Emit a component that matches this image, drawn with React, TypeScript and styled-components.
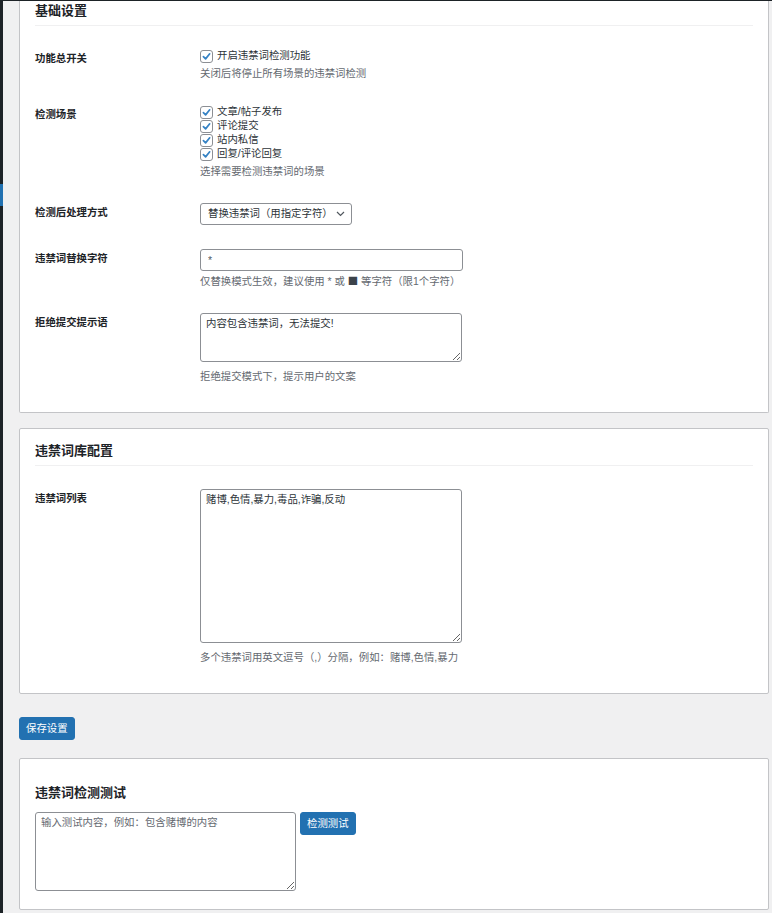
import React from "react";
import styled, { createGlobalStyle } from "styled-components";

const GlobalStyle = createGlobalStyle`
  html, body {
    margin: 0;
    padding: 0;
    background: #f0f0f1;
  }
  body {
    font-family: "Liberation Sans", "Noto Sans CJK SC", sans-serif;
    font-size: 10.4px;
    line-height: 14px;
    color: #1d2327;
  }
  * { box-sizing: border-box; }
`;

const TopBar = styled.div`
  height: 1px;
  background: #1d2327;
`;

const Layout = styled.div`
  display: flex;
  min-height: 912px;
`;

const SideEdge = styled.div`
  width: 3px;
  flex: none;
  background: #1d2327;
  display: flex;
  flex-direction: column;
`;

const SideActive = styled.div`
  margin-top: 183px;
  height: 22px;
  background: #2271b1;
`;

const Main = styled.main`
  flex: 1;
  padding: 0 3px 2px 16px;
  display: flex;
  flex-direction: column;
  align-items: stretch;
`;

const Card = styled.section<{ $clipped?: boolean; $gap?: number }>`
  background: #fff;
  border: 1px solid #c3c4c7;
  border-top-width: ${(p) => (p.$clipped ? 0 : 1)}px;
  border-radius: ${(p) => (p.$clipped ? "0 0 2px 2px" : "2px")};
  margin-top: ${(p) => p.$gap ?? 0}px;
  padding: ${(p) => (p.$clipped ? 1 : 13)}px 15px 16px;
`;

const TestCard = styled(Card)`
  padding: 25px 15px 18px;
`;

const CardTitle = styled.h2<{ $plain?: boolean }>`
  margin: 0;
  font-size: 13px;
  line-height: 18px;
  font-weight: 600;
  color: #1d2327;
  padding-bottom: ${(p) => (p.$plain ? 0 : 5)}px;
  border-bottom: ${(p) => (p.$plain ? "none" : "1px solid #f0f0f1")};
  margin-bottom: ${(p) => (p.$plain ? 10 : 0)}px;
`;

const Rows = styled.div`
  margin-top: 11px;
`;

const Row = styled.div`
  display: grid;
  grid-template-columns: 165px 1fr;
  padding: 12px 0;
`;

const RowLabel = styled.div`
  font-weight: 600;
  line-height: 15px;
  padding-top: 2px;
  color: #1d2327;
`;

const Field = styled.div`
  display: flex;
  flex-direction: column;
  align-items: flex-start;
`;

const CheckLine = styled.label`
  display: flex;
  align-items: center;
  height: 14px;
  gap: 4px;
  color: #2c3338;
  cursor: pointer;
`;

const HiddenInput = styled.input`
  position: absolute;
  opacity: 0;
  width: 0;
  height: 0;
  margin: 0;
`;

const CheckBox = styled.span`
  width: 13px;
  height: 13px;
  flex: none;
  display: inline-flex;
  align-items: center;
  justify-content: center;
  background: #fff;
  border: 1px solid #8c8f94;
  border-radius: 3px;
`;

const Hint = styled.p<{ $gap?: number }>`
  margin: ${(p) => p.$gap ?? 3}px 0 0;
  height: 15px;
  line-height: 15px;
  color: #646970;
`;

const Glyph = styled.span`
  font-family: "Noto Sans CJK SC", sans-serif;
  line-height: 0;
  color: #3c434a;
`;

const SelectWrap = styled.div`
  position: relative;
  display: inline-block;
`;

const Select = styled.select`
  appearance: none;
  height: 22px;
  width: 152px;
  padding: 0 22px 0 7px;
  border: 1px solid #8c8f94;
  border-radius: 3px;
  background: #fff;
  color: #2c3338;
  font: inherit;
  line-height: 20px;
`;

const Chevron = styled.svg`
  position: absolute;
  right: 7px;
  top: 8px;
  pointer-events: none;
`;

const TextInput = styled.input`
  width: 263px;
  height: 22px;
  padding: 0 7px;
  border: 1px solid #8c8f94;
  border-radius: 3px;
  font: inherit;
  color: #50575e;
  background: #fff;
`;

const TextArea = styled.textarea<{ $w: number; $h: number }>`
  display: block;
  width: ${(p) => p.$w}px;
  height: ${(p) => p.$h}px;
  padding: 3px 5px;
  border: 1px solid #8c8f94;
  border-radius: 3px;
  font: inherit;
  line-height: 14px;
  color: #2c3338;
  background: #fff;
  resize: both;
  &::placeholder {
    color: #646970;
  }
`;

const Button = styled.button`
  height: 23px;
  padding: 0 6px;
  border: 1px solid #2271b1;
  border-radius: 3px;
  background: #2271b1;
  color: #fff;
  font: inherit;
  line-height: 21px;
  cursor: pointer;
  flex: none;
`;

const SaveButton = styled(Button)`
  align-self: flex-start;
  margin-top: 23px;
`;

const TestRow = styled.div`
  display: flex;
  align-items: flex-start;
  gap: 4px;
`;

const Check = ({ label, checked = true }: { label: string; checked?: boolean }) => (
  <CheckLine>
    <HiddenInput type="checkbox" defaultChecked={checked} />
    <CheckBox>
      {checked && (
        <svg width="11" height="11" viewBox="0 0 11 11">
          <path
            d="M2.4 5.6 L4.6 7.9 L8.7 2.8"
            fill="none"
            stroke="#3582c4"
            strokeWidth="1.7"
            strokeLinecap="round"
            strokeLinejoin="round"
          />
        </svg>
      )}
    </CheckBox>
    <span>{label}</span>
  </CheckLine>
);

const scenes = ["文章/帖子发布", "评论提交", "站内私信", "回复/评论回复"];

export default function App() {
  return (
    <>
      <GlobalStyle />
      <TopBar />
      <Layout>
        <SideEdge>
          <SideActive />
        </SideEdge>
        <Main>
          <Card $clipped>
            <CardTitle>基础设置</CardTitle>
            <Rows>
              <Row>
                <RowLabel>功能总开关</RowLabel>
                <Field>
                  <Check label="开启违禁词检测功能" />
                  <Hint>关闭后将停止所有场景的违禁词检测</Hint>
                </Field>
              </Row>
              <Row>
                <RowLabel>检测场景</RowLabel>
                <Field>
                  {scenes.map((s) => (
                    <Check key={s} label={s} />
                  ))}
                  <Hint>选择需要检测违禁词的场景</Hint>
                </Field>
              </Row>
              <Row>
                <RowLabel>检测后处理方式</RowLabel>
                <Field>
                  <SelectWrap>
                    <Select defaultValue="replace">
                      <option value="replace">替换违禁词（用指定字符）</option>
                      <option value="reject">拒绝提交</option>
                    </Select>
                    <Chevron width="9" height="6" viewBox="0 0 9 6">
                      <path
                        d="M1 1 L4.5 4.5 L8 1"
                        fill="none"
                        stroke="#50575e"
                        strokeWidth="1.2"
                      />
                    </Chevron>
                  </SelectWrap>
                </Field>
              </Row>
              <Row>
                <RowLabel>违禁词替换字符</RowLabel>
                <Field>
                  <TextInput defaultValue="*" />
                  <Hint>
                    仅替换模式生效，建议使用 * 或 <Glyph>■</Glyph> 等字符（限1个字符）
                  </Hint>
                </Field>
              </Row>
              <Row>
                <RowLabel>拒绝提交提示语</RowLabel>
                <Field>
                  <TextArea $w={262} $h={49} defaultValue="内容包含违禁词，无法提交!" />
                  <Hint $gap={7}>拒绝提交模式下，提示用户的文案</Hint>
                </Field>
              </Row>
            </Rows>
          </Card>

          <Card $gap={15}>
            <CardTitle>违禁词库配置</CardTitle>
            <Rows>
              <Row>
                <RowLabel>违禁词列表</RowLabel>
                <Field>
                  <TextArea $w={262} $h={154} defaultValue="赌博,色情,暴力,毒品,诈骗,反动" />
                  <Hint $gap={7}>多个违禁词用英文逗号（,）分隔，例如：赌博,色情,暴力</Hint>
                </Field>
              </Row>
            </Rows>
          </Card>

          <SaveButton type="button">保存设置</SaveButton>

          <TestCard $gap={18}>
            <CardTitle $plain>违禁词检测测试</CardTitle>
            <TestRow>
              <TextArea $w={261} $h={79} placeholder="输入测试内容，例如：包含赌博的内容" />
              <Button type="button">检测测试</Button>
            </TestRow>
          </TestCard>
        </Main>
      </Layout>
    </>
  );
}
